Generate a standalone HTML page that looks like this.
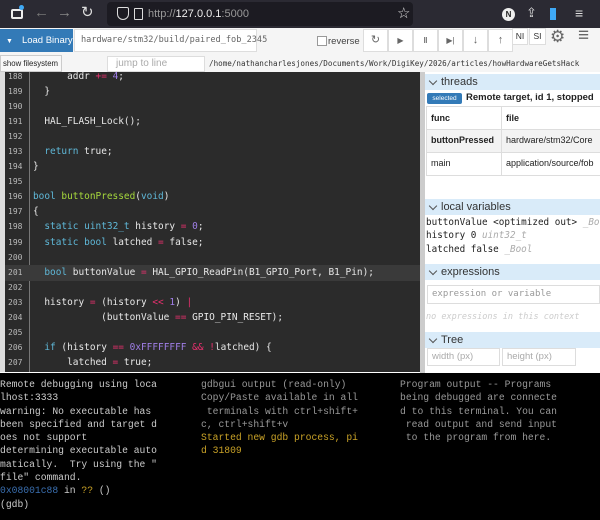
<!DOCTYPE html>
<html><head><meta charset="utf-8"><style>
*{box-sizing:border-box;margin:0;padding:0}
body{width:600px;height:520px;overflow:hidden;background:#fff;font-family:"Liberation Sans",sans-serif;position:relative}
.a{position:absolute;white-space:nowrap}
.mono{font-family:"DejaVu Sans Mono","Liberation Mono",monospace}
.tm{font-family:"Liberation Mono",monospace;font-size:9.7px;line-height:13.3px;color:#ccc;white-space:pre}
.code div{height:15.1px;line-height:15.1px;white-space:pre}
.ln div{height:15.1px;line-height:15.1px;font-size:8px;color:#bbb}
.k{color:#5fb8d8}.f{color:#a6d83c}.o{color:#e8306e}.n{color:#a07fe8}
.hd{background:#d9ebf9;height:16px;font-size:11px;color:#333;padding-left:16px;line-height:16px;position:absolute;left:425px;width:175px}
.hd:before{content:"";position:absolute;left:5px;top:4px;width:5px;height:5px;border-right:1.5px solid #555;border-bottom:1.5px solid #555;transform:rotate(45deg)}
.tb{position:absolute;top:29px;height:23px;width:25px;border:1px solid #ddd;background:#fff;color:#666;font-size:11px;text-align:center;line-height:21px}
</style></head><body>
<div class="a" style="left:0;top:0;width:600px;height:28px;background:#2b2a33"></div>
<div class="a" style="left:107px;top:2px;width:306px;height:24px;background:#1c1b22;border-radius:4px"></div>
<div class="a" style="left:11px;top:9px;width:12px;height:10px;border:2px solid #eee;border-radius:2px"></div>
<div class="a" style="left:19px;top:5px;width:5px;height:5px;background:#3fa9f5;border-radius:50%"></div>
<div class="a" style="left:34px;top:4px;color:#777;font-size:15px">←</div>
<div class="a" style="left:57px;top:4px;color:#888;font-size:15px">→</div>
<div class="a" style="left:81px;top:3px;color:#ddd;font-size:15px">↻</div>
<div class="a" style="left:117px;top:7px;width:12px;height:13px;border:1.5px solid #ddd;border-radius:2px 2px 6px 6px"></div>
<div class="a" style="left:134px;top:8px;width:9px;height:12px;border:1.5px solid #ddd;border-radius:1px"></div>
<div class="a" style="left:148px;top:8px;font-size:11px;color:#999">http://<span style="color:#eee">127.0.0.1</span>:5000</div>
<div class="a" style="left:397px;top:4px;color:#ddd;font-size:15px">☆</div>
<div class="a" style="left:502px;top:8px;width:13px;height:13px;background:#eee;border-radius:50%;font-size:8px;font-weight:bold;text-align:center;line-height:13px;color:#222">N</div>
<div class="a" style="left:526px;top:5px;color:#ddd;font-size:13px">⇪</div>
<div class="a" style="left:550px;top:8px;width:6px;height:12px;background:#3fa9f5"></div>
<div class="a" style="left:575px;top:5px;color:#ddd;font-size:14px">≡</div>
<div class="a" style="left:0;top:28px;width:600px;height:44px;background:#f5f5f5"></div>
<div class="a" style="left:0;top:29px;width:73px;height:23px;background:#337ab7;color:#fff;font-size:9.5px;line-height:23px;overflow:hidden"><span style="padding-left:6px;font-size:7px">▼</span><span style="padding-left:9px">Load Binary</span></div>
<div class="a mono" style="left:74px;top:29px;width:183px;height:23px;background:#fff;border:1px solid #ddd;font-size:8.6px;color:#666;line-height:21px;padding-left:6px">hardware/stm32/build/paired_fob_2345</div>
<div class="a" style="left:317px;top:36px;width:10px;height:10px;border:1px solid #999;background:#fff"></div>
<div class="a" style="left:328px;top:36px;font-size:9.5px;color:#444">reverse</div>
<div class="tb" style="left:363px">↻</div>
<div class="tb" style="left:388px;font-size:8px">▶</div>
<div class="tb" style="left:413px;font-size:8px;font-weight:bold">ǁ</div>
<div class="tb" style="left:438px;font-size:8px">▶|</div>
<div class="tb" style="left:463px">↓</div>
<div class="tb" style="left:488px">↑</div>
<div class="a" style="left:512px;top:28px;width:16px;height:17px;background:#fff;border:1px solid #ddd;font-size:8.5px;text-align:center;line-height:15px;color:#333">NI</div>
<div class="a" style="left:529px;top:28px;width:17px;height:17px;background:#fff;border:1px solid #ddd;font-size:8.5px;text-align:center;line-height:15px;color:#333">SI</div>
<div class="a" style="left:550px;top:27px;font-size:17px;color:#666">⚙</div>
<div class="a" style="left:578px;top:25px;font-size:19px;color:#666">≡</div>
<div class="a" style="left:0;top:55px;width:62px;height:17px;border:1px solid #ccc;background:#f8f8f8;font-size:7.8px;line-height:15px;padding-left:2px;color:#222;overflow:hidden">show filesystem</div>
<div class="a" style="left:107px;top:56px;width:98px;height:16px;border:1px solid #ddd;background:#fff;font-size:10px;line-height:14px;padding-left:8px;color:#aaa">jump to line</div>
<div class="a mono" style="left:209px;top:59px;font-size:7.6px;color:#333">/home/nathancharlesjones/Documents/Work/DigiKey/2026/articles/howHardwareGetsHack</div>
<div class="a" style="left:0;top:72px;width:5px;height:300px;background:#ddd"></div>
<div class="a" style="left:5px;top:72px;width:415px;height:300px;background:#2b2b2b"></div>
<div class="a" style="left:29px;top:72px;width:1px;height:300px;background:#777"></div>
<div class="a" style="left:5px;top:265px;width:415px;height:16px;background:#3a3a3a"></div>
<div class="a ln mono" style="left:8px;top:68.5px;width:22px">
<div>188</div><div>189</div><div>190</div><div>191</div><div>192</div><div>193</div><div>194</div><div>195</div><div>196</div><div>197</div><div>198</div><div>199</div><div>200</div><div>201</div><div>202</div><div>203</div><div>204</div><div>205</div><div>206</div><div>207</div></div>
<div class="a code mono" style="left:33px;top:68.5px;width:385px;font-size:9.45px;color:#e8e8e8;overflow:hidden;height:303px">
<div>      addr <span class="o">+=</span> <span class="n">4</span>;</div>
<div>  }</div>
<div> </div>
<div>  HAL_FLASH_Lock();</div>
<div> </div>
<div>  <span class="k">return</span> true;</div>
<div>}</div>
<div> </div>
<div><span class="k">bool</span> <span class="f">buttonPressed</span>(<span class="k">void</span>)</div>
<div>{</div>
<div>  <span class="k">static</span> <span class="k">uint32_t</span> history <span class="o">=</span> <span class="n">0</span>;</div>
<div>  <span class="k">static</span> <span class="k">bool</span> latched <span class="o">=</span> false;</div>
<div> </div>
<div>  <span class="k">bool</span> buttonValue <span class="o">=</span> HAL_GPIO_ReadPin(B1_GPIO_Port, B1_Pin);</div>
<div> </div>
<div>  history <span class="o">=</span> (history <span class="o">&lt;&lt;</span> <span class="n">1</span>) <span class="o">|</span></div>
<div>            (buttonValue <span class="o">==</span> GPIO_PIN_RESET);</div>
<div> </div>
<div>  <span class="k">if</span> (history <span class="o">==</span> <span class="n">0xFFFFFFFF</span> <span class="o">&amp;&amp;</span> <span class="o">!</span>latched) {</div>
<div>      latched <span class="o">=</span> true;</div>
</div>
<div class="a" style="left:420px;top:72px;width:5px;height:301px;background:#ccc"></div>
<div class="hd" style="top:74px">threads</div>
<div class="a" style="left:427px;top:93px;width:35px;height:11px;background:#337ab7;border-radius:2px;color:#fff;font-size:6.5px;text-align:center;line-height:11px">selected</div>
<div class="a" style="left:466px;top:92px;font-size:9.5px;font-weight:bold;color:#222">Remote target, id 1, stopped</div>
<div class="a" style="left:426px;top:106px;width:174px;height:70px;font-size:9px;color:#222">
<div style="height:24px;border:1px solid #ddd;border-right:none;display:flex"><div style="width:75px;border-right:1px solid #ddd;padding:6px 4px;font-weight:bold">func</div><div style="padding:6px 4px;font-weight:bold">file</div></div>
<div style="height:23px;border:1px solid #ddd;border-top:none;border-right:none;display:flex;background:#f3f3f3"><div style="width:75px;border-right:1px solid #ddd;padding:5px 4px;font-weight:bold">buttonPressed</div><div style="padding:5px 4px;overflow:hidden">hardware/stm32/Core</div></div>
<div style="height:23px;border:1px solid #ddd;border-top:none;border-right:none;display:flex"><div style="width:75px;border-right:1px solid #ddd;padding:5px 4px">main</div><div style="padding:5px 4px;overflow:hidden">application/source/fob</div></div>
</div>
<div class="hd" style="top:199px">local variables</div>
<div class="a mono" style="left:426px;top:216px;font-size:9.3px;line-height:13.3px;color:#222;white-space:pre;width:174px;overflow:hidden">buttonValue &lt;optimized out&gt; <i style="color:#aaa">_Bo</i>
history 0 <i style="color:#aaa">uint32_t</i>
latched false <i style="color:#aaa">_Bool</i></div>
<div class="hd" style="top:264px">expressions</div>
<div class="a mono" style="left:427px;top:285px;width:173px;height:19px;border:1px solid #ddd;font-size:9px;color:#999;line-height:17px;padding-left:4px">expression or variable</div>
<div class="a mono" style="left:426px;top:312px;font-size:8.5px;color:#ccc;font-style:italic">no expressions in this context</div>
<div class="hd" style="top:332px">Tree</div>
<div class="a" style="left:427px;top:348px;width:73px;height:18px;border:1px solid #ddd;font-size:9.5px;color:#aaa;line-height:16px;padding-left:4px">width (px)</div>
<div class="a" style="left:502px;top:348px;width:74px;height:18px;border:1px solid #ddd;font-size:9.5px;color:#aaa;line-height:16px;padding-left:4px">height (px)</div>
<div class="a" style="left:0;top:373px;width:600px;height:147px;background:#000"></div>
<div class="a tm" style="left:0;top:378px">Remote debugging using loca
lhost:3333
warning: No executable has
been specified and target d
oes not support
determining executable auto
matically.  Try using the "
file" command.
<span style="color:#3a6fb0">0x08001c88</span> in <span style="color:#c9a227">??</span> ()
(gdb)</div>
<div class="a tm" style="left:201px;top:378px;color:#999">gdbgui output (read-only)
Copy/Paste available in all
 terminals with ctrl+shift+
c, ctrl+shift+v
<span style="color:#c9a227">Started new gdb process, pi
d 31809</span></div>
<div class="a tm" style="left:400px;top:378px;color:#999">Program output -- Programs
being debugged are connecte
d to this terminal. You can
 read output and send input
 to the program from here.</div>
</body></html>
